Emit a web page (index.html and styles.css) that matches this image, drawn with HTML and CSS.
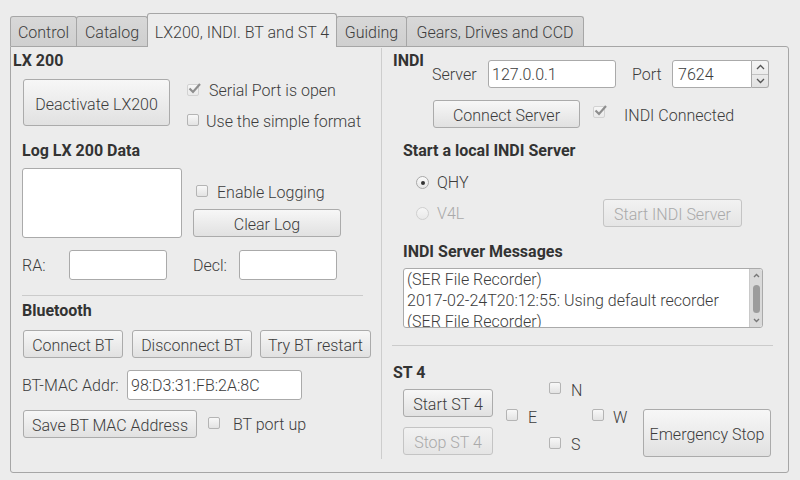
FILE: index.html
```html
<!DOCTYPE html>
<html>
<head>
<meta charset="utf-8">
<title>LX200, INDI. BT and ST 4</title>
<link rel="stylesheet" href="styles.css">
</head>
<body>
<div class="window">
  <div class="tabs">
    <div class="tab w-control">Control</div>
    <div class="tab w-catalog">Catalog</div>
    <div class="tab active w-lx">LX200, INDI. BT and ST 4</div>
    <div class="tab w-guiding">Guiding</div>
    <div class="tab w-gears">Gears, Drives and CCD</div>
  </div>
  <div class="panel">
    <div class="left">
      <div class="title t-lx">LX 200</div>
      <div class="lx-row">
        <button class="btn btn-deact">Deactivate LX200</button>
        <div class="checks">
          <div class="check"><span class="cb checked"><svg width="15" height="13" viewBox="0 0 15 13"><path d="M2.5 6.5 L6 10 L13 2" fill="none" stroke="#8e8e8e" stroke-width="2.2"/></svg></span>Serial Port is open</div>
          <div class="check c2"><span class="cb"></span>Use the simple format</div>
        </div>
      </div>
      <div class="title t-log">Log LX 200 Data</div>
      <div class="log-row">
        <div class="field logbox"></div>
        <div class="log-side">
          <div class="check"><span class="cb g9"></span>Enable Logging</div>
          <button class="btn btn-clear">Clear Log</button>
        </div>
      </div>
      <div class="coord-row">
        <span class="lbl lbl-ra">RA:</span>
        <div class="field inp-coord"></div>
        <span class="lbl lbl-decl">Decl:</span>
        <div class="field inp-coord"></div>
      </div>
      <div class="sep sep-left"></div>
      <div class="title t-bt">Bluetooth</div>
      <div class="bt-row">
        <button class="btn b-conn">Connect BT</button>
        <button class="btn b-disc">Disconnect BT</button>
        <button class="btn b-try">Try BT restart</button>
      </div>
      <div class="mac-row">
        <span class="lbl lbl-mac">BT-MAC Addr:</span>
        <div class="field inp-mac">98:D3:31:FB:2A:8C</div>
      </div>
      <div class="save-row">
        <button class="btn b-save">Save BT MAC Address</button>
        <span class="cb cb-save"></span>
        <span class="lbl">BT port up</span>
      </div>
    </div>
    <div class="vline"></div>
    <div class="right">
      <div class="indi-head">
        <div class="title t-indi">INDI</div>
        <div class="server-row">
          <span class="lbl lbl-server">Server</span>
          <div class="field inp-server">127.0.0.1</div>
          <span class="lbl lbl-port">Port</span>
          <div class="spin">
            <div class="field spin-val">7624</div>
            <div class="spin-btns">
              <div class="spin-half"><svg width="9" height="6" viewBox="0 0 9 6"><path d="M1 5 L4.5 1.5 L8 5" fill="none" stroke="#555" stroke-width="1.3"/></svg></div>
              <div class="spin-half top-line"><svg width="9" height="6" viewBox="0 0 9 6"><path d="M1 1 L4.5 4.5 L8 1" fill="none" stroke="#555" stroke-width="1.3"/></svg></div>
            </div>
          </div>
        </div>
      </div>
      <div class="connect-row">
        <button class="btn b-server">Connect Server</button>
        <span class="cb checked cb-indi"><svg width="15" height="13" viewBox="0 0 15 13"><path d="M2.5 6.5 L6 10 L13 2" fill="none" stroke="#8e8e8e" stroke-width="2.2"/></svg></span>
        <span class="lbl lbl-conn">INDI Connected</span>
      </div>
      <div class="title t-local">Start a local INDI Server</div>
      <div class="radio-row">
        <span class="radio on"></span><span>QHY</span>
      </div>
      <div class="v4l-row">
        <div class="radio-lbl disabled"><span class="radio off"></span><span class="lbl">V4L</span></div>
        <button class="btn disabled b-start">Start INDI Server</button>
      </div>
      <div class="title t-msgs">INDI Server Messages</div>
      <div class="field msgbox">
        <div class="msgtext">(SER File Recorder)<br>2017-02-24T20:12:55: Using default recorder<br>(SER File Recorder)</div>
        <div class="scrollbar">
          <svg class="sb-up" width="7" height="5" viewBox="0 0 7 5"><path d="M1 4 L3.5 1.5 L6 4" fill="none" stroke="#777" stroke-width="1.4"/></svg>
          <div class="thumb"></div>
          <svg class="sb-down" width="7" height="5" viewBox="0 0 7 5"><path d="M1 1 L3.5 3.5 L6 1" fill="none" stroke="#777" stroke-width="1.4"/></svg>
        </div>
      </div>
      <div class="sep sep-right"></div>
      <div class="title t-st4">ST 4</div>
      <div class="st4-row">
        <div class="st4-btns">
          <button class="btn b-st4">Start ST 4</button>
          <button class="btn disabled b-st4">Stop ST 4</button>
        </div>
        <div class="compass">
          <div class="check dir d-n"><span class="cb"></span>N</div>
          <div class="check dir d-e"><span class="cb"></span>E</div>
          <div class="check dir d-w"><span class="cb w9"></span>W</div>
          <div class="check dir d-s"><span class="cb"></span>S</div>
        </div>
        <button class="btn b-emerg">Emergency Stop</button>
      </div>
    </div>
  </div>
</div>
</body>
</html>
```
FILE: styles.css
```css
* { box-sizing: border-box; }
html, body { margin: 0; padding: 0; }
body {
  width: 800px;
  height: 480px;
  overflow: hidden;
  background: #ececec;
  font-family: Roboto, "Liberation Sans", sans-serif;
  font-size: 16px;
  font-weight: 300;
  line-height: 20px;
  color: #3c3c3c;
}
.window { padding: 13px 11px 0 10px; }

/* tabs */
.tabs { display: flex; align-items: flex-end; height: 33px; }
.tab {
  height: 30px;
  border: 1px solid #a6a6a6;
  border-bottom: none;
  border-radius: 3px 3px 0 0;
  background: linear-gradient(#d8d8d8, #cfcfcf);
  text-align: center;
  padding-top: 6px;
  margin-left: -1px;
  white-space: nowrap;
}
.tab:first-child { margin-left: 0; }
.tab.active {
  height: 34px;
  margin-bottom: -1px;
  padding-top: 9px;
  background: #ececec;
  position: relative;
  z-index: 1;
}
.w-control { width: 67px; }
.w-catalog { width: 72px; }
.w-lx { width: 190px; }
.w-guiding { width: 71px; }
.w-gears { width: 178px; }

/* panel */
.panel {
  display: flex;
  height: 427px;
  border: 1px solid #a6a6a6;
  border-radius: 0 3px 3px 3px;
}
.left { width: 370px; padding-left: 11px; }
.vline { width: 1px; background: #cdcdcd; margin: 1px 0 13px; }
.right { flex: 1; padding-left: 11px; }

.title { font-weight: 700; line-height: 18px; color: #333; white-space: nowrap; padding-top: 1px; height: 19px; }

/* generic widgets */
.btn {
  display: flex;
  align-items: center;
  justify-content: center;
  padding: 4px 0 0;
  font: inherit;
  line-height: 20px;
  color: #3c3c3c;
  background: linear-gradient(#f7f7f7, #e1e1e1);
  border: 1px solid #ababab;
  border-radius: 3px;
  white-space: nowrap;
}
.btn.disabled {
  color: #a9a9a9;
  border-color: #c4c4c4;
  background: linear-gradient(#f2f2f2, #e5e5e5);
}
.field {
  background: #fff;
  border: 1px solid #aaaaaa;
  border-radius: 3px;
  white-space: nowrap;
}
.lbl { padding-top: 2px; white-space: nowrap; }
.check { display: flex; align-items: flex-start; white-space: nowrap; }
.cb {
  flex: none;
  width: 12px;
  height: 12px;
  margin-top: 2px;
  margin-right: 7px;
  border: 1px solid #b4b4b4;
  border-radius: 2px;
  background: linear-gradient(#f8f8f8, #e3e3e3);
  position: relative;
}
.cb.checked {
  border-color: #d2d2d2;
  background: linear-gradient(#f6f6f6, #eaeaea);
  margin-right: 10px;
}
.cb.checked svg { position: absolute; left: -1px; top: -3px; }
.cb.g9 { margin-right: 9px; }
.radio {
  flex: none;
  width: 13px;
  height: 13px;
  border: 1px solid #a9a9a9;
  border-radius: 50%;
  background: linear-gradient(#fafafa, #e6e6e6);
  margin-right: 8px;
  display: flex;
  align-items: center;
  justify-content: center;
}
.radio.on::after {
  content: "";
  width: 4px;
  height: 4px;
  border-radius: 50%;
  background: #333;
}
.radio.off { border-color: #cfcfcf; background: linear-gradient(#f6f6f6, #e9e9e9); }
.sep { height: 1px; background: #cbcbcb; }

/* left column */
.t-lx { margin: 4px 0 0 -9px; }
.lx-row { display: flex; align-items: flex-start; margin-top: 9px; }
.btn-deact { width: 147px; height: 47px; margin-left: 1px; }
.checks { margin-left: 17px; padding-top: 2px; }
.checks .cb.checked { margin-top: 3px; }
.check.c2 { margin-top: 11px; }
.t-log { margin-top: 9px; }
.log-row { display: flex; margin-top: 8px; }
.logbox { width: 160px; height: 70px; }
.log-side { margin-left: 11px; padding-top: 15px; }
.log-side .check { padding-left: 3px; }
.log-side .cb { margin-top: 2px; }
.btn-clear { width: 148px; height: 28px; margin-top: 6px; }
.coord-row { display: flex; align-items: center; margin-top: 12px; }
.lbl-ra { width: 47px; }
.lbl-decl { width: 46px; margin-left: 26px; }
.inp-coord { width: 98px; height: 30px; }
.sep-left { margin-top: 15px; width: 341px; }
.t-bt { margin-top: 5px; }
.bt-row { display: flex; margin-top: 10px; }
.bt-row .btn { height: 28px; }
.b-conn { width: 100px; margin-left: 1px; }
.b-disc { width: 120px; margin-left: 9px; }
.b-try { width: 111px; margin-left: 8px; }
.mac-row { display: flex; align-items: center; margin-top: 12px; }
.lbl-mac { width: 105px; }
.inp-mac { width: 175px; height: 30px; padding: 5px 0 0 3px; }
.save-row { display: flex; align-items: center; margin-top: 10px; }
.b-save { width: 174px; height: 28px; margin-left: 1px; }
.cb-save { margin: -3px 13px 0 11px; }

/* right column */
.indi-head { display: flex; align-items: flex-start; margin-top: 4px; }
.t-indi { width: 39px; }
.server-row { display: flex; align-items: center; margin-top: 9px; }
.lbl-server { width: 56px; }
.inp-server { width: 128px; height: 28px; padding: 4px 0 0 3px; }
.lbl-port { width: 40px; margin-left: 16px; }
.spin { display: flex; width: 97px; height: 28px; }
.spin-val { flex: 1; height: 28px; padding: 4px 0 0 5px; border-radius: 3px 0 0 3px; }
.spin-btns {
  width: 17px;
  display: flex;
  flex-direction: column;
  border: 1px solid #aaaaaa;
  border-left: none;
  border-radius: 0 3px 3px 0;
  background: linear-gradient(#f5f5f5, #e2e2e2);
}
.spin-half { flex: 1; display: flex; align-items: center; justify-content: center; }
.spin-half.top-line { border-top: 1px solid #c2c2c2; }
.connect-row { display: flex; align-items: center; margin: 12px 0 0 40px; }
.b-server { width: 147px; height: 28px; }
.cb.cb-indi { margin: -4px 19px 0 13px; }
.lbl-conn { padding-top: 3px; }
.t-local { margin: 13px 0 0 10px; }
.radio-row { display: flex; align-items: flex-start; margin: 13px 0 0 23px; }
.radio-row .radio { margin-top: 3px; }
.v4l-row { display: flex; align-items: center; margin: 6px 0 0 23px; }
.radio-lbl { display: flex; align-items: center; width: 187px; }
.radio-lbl.disabled { color: #a9a9a9; }
.b-start { width: 139px; height: 28px; }
.t-msgs { margin: 15px 0 0 10px; }
.msgbox { display: flex; width: 360px; height: 60px; margin: 7px 0 0 10px; overflow: hidden; }
.msgtext { flex: 1; padding-left: 3px; line-height: 21px; overflow: hidden; }
.scrollbar {
  width: 13px;
  display: flex;
  flex-direction: column;
  align-items: center;
  background: #dadada;
  border-left: 1px solid #c9c9c9;
  border-radius: 0 2px 2px 0;
}
.sb-up { margin-top: 4px; }
.thumb { width: 7px; height: 28px; margin-top: 7px; border-radius: 4px; background: #9c9c9c; }
.sb-down { margin-top: auto; margin-bottom: 4px; }
.sep-right { margin: 17px 0 0 -1px; width: 381px; }
.t-st4 { margin-top: 17px; }
.st4-row { display: flex; align-items: flex-start; margin-top: -3px; }
.st4-btns { display: flex; flex-direction: column; gap: 10px; margin: 10px 0 0 10px; }
.b-st4 { width: 90px; height: 28px; }
.compass {
  display: grid;
  grid-template-columns: 43px 43px 43px;
  grid-template-rows: 27px 27px 27px;
  margin-left: 13px;
  padding-top: 1px;
}
.dir { padding-top: 1px; }
.dir .cb { margin-right: 10px; margin-top: 1px; }
.dir .cb.w9 { margin-right: 9px; }
.d-n { grid-column: 2; grid-row: 1; }
.d-e { grid-column: 1; grid-row: 2; }
.d-w { grid-column: 3; grid-row: 2; }
.d-s { grid-column: 2; grid-row: 3; }
.dir.d-s .cb { margin-top: 2px; }
.b-emerg { width: 128px; height: 48px; margin: 30px 0 0 8px; }
```
